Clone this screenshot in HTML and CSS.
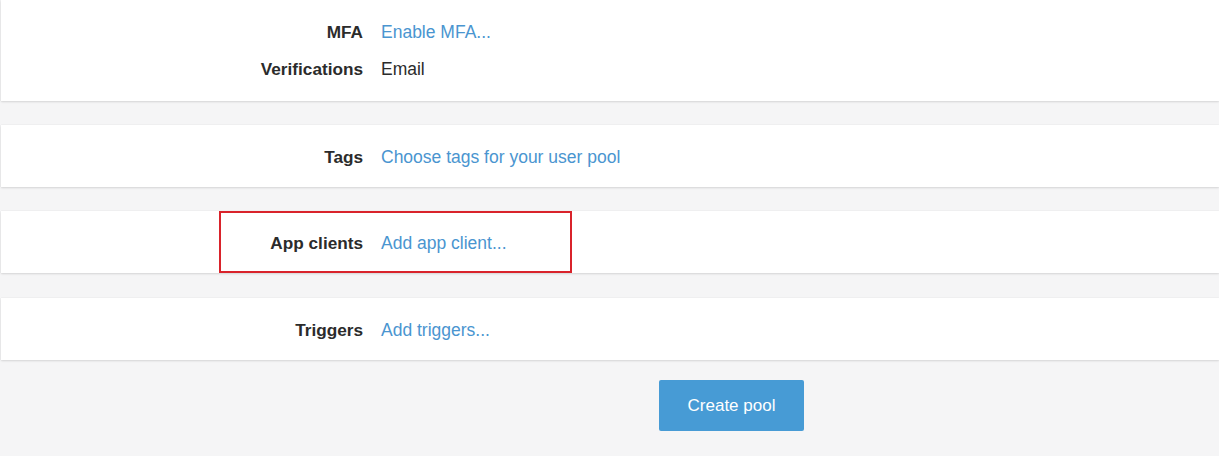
FILE: index.html
```html
<!doctype html>
<html>
    <head>
        <title>Review</title>
        <link rel="stylesheet" href="styles.css">
    </head>
    <body>
        <div class="page">
            <div class="card first">
                <div class="row">
                    <div class="label">MFA</div>
                    <a class="value link" href="#">Enable MFA...</a>
                </div>
                <div class="row">
                    <div class="label">Verifications</div>
                    <div class="value">Email</div>
                </div>
            </div>

            <div class="card">
                <div class="row">
                    <div class="label">Tags</div>
                    <a class="value link" href="#">Choose tags for your user pool</a>
                </div>
            </div>

            <div class="card marked">
                <div class="row">
                    <div class="label">App clients</div>
                    <a class="value link" href="#">Add app client...</a>
                </div>
                <div class="highlight"></div>
            </div>

            <div class="card">
                <div class="row">
                    <div class="label">Triggers</div>
                    <a class="value link" href="#">Add triggers...</a>
                </div>
            </div>

            <div class="actions">
                <button class="btn">Create pool</button>
            </div>
        </div>
    </body>
</html>
```

FILE: styles.css
```css
body{
    margin: 0;
    background: #f5f5f6;
    font-family: 'Liberation Sans', Arial, sans-serif;
    font-size: 17.5px;
    color: #2b2b2b;
}
.page{
    padding-left: 1px;
}

.card{
    background: #fff;
    padding: 13px 0 11px 0;
    margin-bottom: 24px;
    box-shadow: 0 1px 2px rgba(0, 0, 0, 0.12), 0 0 1px rgba(0, 0, 0, 0.1);
}
.card.first{
    padding: 14px 0 13px 0;
}
.card.first .row{
    line-height: 37px;
}
.marked{
    position: relative;
    margin-bottom: 25px;
}

.row{
    display: grid;
    grid-template-columns: 362px auto;
    column-gap: 18px;
    line-height: 38px;
}
.label{
    text-align: right;
    font-weight: bold;
    font-size: 17.2px;
    color: #2b2b2b;
}
.value{
    color: #2b2b2b;
    justify-self: start;
}
.link{
    color: #4a95d0;
    text-decoration: none;
}

/* annotation box */
.highlight{
    position: absolute;
    left: 218px;
    top: 0;
    width: 353px;
    height: 62px;
    box-sizing: border-box;
    border: 2px solid #d9232b;
}

.actions{
    padding-left: 658px;
    margin-top: -4px;
}
.btn{
    width: 145px;
    height: 51px;
    border: none;
    border-radius: 2px;
    background: #479bd5;
    color: #fff;
    font-family: 'Liberation Sans', Arial, sans-serif;
    font-size: 17px;
    cursor: pointer;
}
```
